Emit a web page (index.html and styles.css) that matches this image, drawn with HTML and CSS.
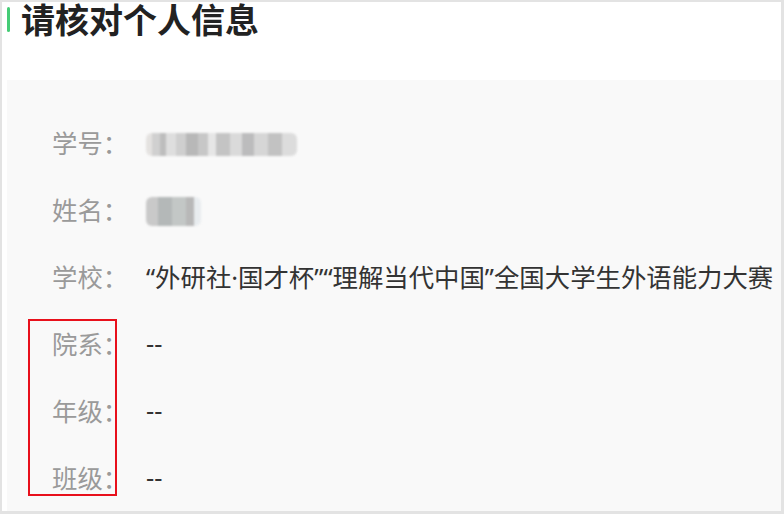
FILE: index.html
```html
<!DOCTYPE html>
<html lang="zh-CN">
<head>
    <meta charset="UTF-8">
    <meta name="viewport" content="width=device-width, initial-scale=1.0">
    <title>请核对个人信息</title>
    <link rel="stylesheet" href="styles.css">
</head>
<body>
    <div class="frame">
        <div class="header">
            <span class="header-bar"></span>
            <h1>请核对个人信息</h1>
        </div>

        <div class="info-panel">
            <div class="info-row">
                <span class="info-label">学号：</span>
                <span class="info-value"><span class="blur blur-id"></span></span>
            </div>
            <div class="info-row">
                <span class="info-label">姓名：</span>
                <span class="info-value"><span class="blur blur-name"></span></span>
            </div>
            <div class="info-row">
                <span class="info-label">学校：</span>
                <span class="info-value">“外研社·国才杯”“理解当代中国”全国大学生外语能力大赛</span>
            </div>
            <div class="info-row">
                <span class="info-label">院系：</span>
                <span class="info-value">--</span>
            </div>
            <div class="info-row">
                <span class="info-label">年级：</span>
                <span class="info-value">--</span>
            </div>
            <div class="info-row">
                <span class="info-label">班级：</span>
                <span class="info-value">--</span>
            </div>

            <!-- 标注框 -->
            <div class="mark-box"></div>
        </div>
    </div>
</body>
</html>
```

FILE: styles.css
```css
body {
    margin: 0;
    font-family: "Noto Sans", "Noto Sans CJK SC", sans-serif;
    background-color: #fff;
}
.frame {
    box-sizing: border-box;
    width: 784px;
    height: 514px;
    border-style: solid;
    border-color: #e3e3e3;
    border-width: 2px 3px 3px 2px;
    display: flex;
    flex-direction: column;
}

/* 标题 */
.header {
    height: 78px;
    display: flex;
    align-items: flex-start;
    padding-left: 5px;
    box-sizing: border-box;
}
.header-bar {
    width: 3px;
    height: 25px;
    margin-top: 5px;
    border-radius: 2px;
    background-color: #45cc76;
}
.header h1 {
    margin: 0 0 0 11px;
    font-size: 34px;
    line-height: 36px;
    font-weight: 700;
    color: #222;
}

/* 信息面板 */
.info-panel {
    position: relative;
    flex: 1;
    margin-left: 5px;
    padding: 28px 0 0 45px;
    background-color: #f9f9f9;
}
.info-row {
    display: flex;
    align-items: center;
    height: 67px;
    font-size: 25.4px;
}
.info-label {
    width: 94px;
    flex-shrink: 0;
    color: #9a9a9a;
}
.info-value {
    color: #333;
    white-space: nowrap;
}
.blur {
    display: inline-block;
    vertical-align: middle;
    border-radius: 6px;
    filter: blur(0.8px);
}
.blur-id {
    width: 151px;
    height: 23px;
    background:
        linear-gradient(90deg, #e4e2e0 0 6px, #d0d0d0 6px 14px, #bdbdbd 14px 20px, #dedede 20px 30px, #cfcfcf 30px 40px, #b8b8b8 40px 52px, #c7c7c7 52px 62px, #e6e6e6 62px 70px, #c4c4c4 70px 84px, #dadada 84px 96px, #bcbcbd 96px 108px, #d6d6d6 108px 122px, #c2c2c2 122px 136px, #dcdcdc 136px 151px);
}
.blur-name {
    width: 55px;
    height: 29px;
    background:
        linear-gradient(90deg, #c9c9c9 0 12px, #b4b8b8 12px 26px, #c3c7c6 26px 40px, #b8b8b8 40px 48px, #e8ecef 48px 55px);
}

/* 红色标注 */
.mark-box {
    position: absolute;
    left: 21px;
    top: 239px;
    width: 85px;
    height: 173px;
    border: 2px solid #e8101c;
}
```
